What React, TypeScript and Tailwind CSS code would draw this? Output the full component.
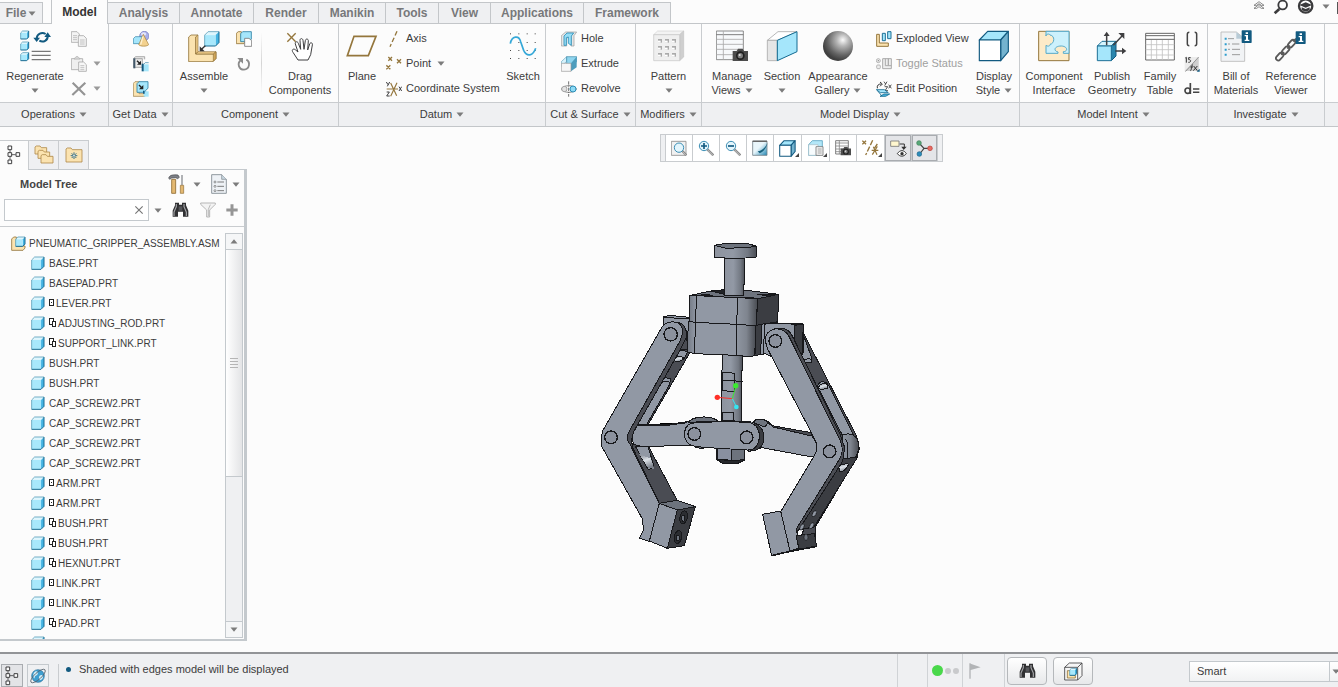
import React from "react";
import type { ReactNode } from "react";

/* ---------- drawing helpers ---------- */

// Icons are drawn on a grid of three units to the pixel.
function Icon({ n = 16, h, children }: { n?: number; h?: number; children: ReactNode }) {
  const hh = h ?? n;
  return (
    <svg width={n} height={hh} viewBox={`0 0 ${n * 3} ${hh * 3}`} className="shrink-0" aria-hidden="true">
      {children}
    </svg>
  );
}

function Caret({ light = false }: { light?: boolean }) {
  return (
    <svg width="8" height="5" viewBox="0 0 8 5" className="shrink-0" aria-hidden="true">
      <path d="M0.5 0.5h7L4 4.8z" fill={light ? "#9a9a9a" : "#7c7c7c"} />
    </svg>
  );
}

function Cube({ x, y, s }: { x: number; y: number; s: number }) {
  const d = s * 0.24;
  return (
    <g strokeLinejoin="round">
      <path d={`M${x} ${y + d}L${x + d} ${y}H${x + s}L${x + s - d} ${y + d}Z`} fill="#dff6fd" />
      <path d={`M${x + s} ${y}V${y + s - d}L${x + s - d} ${y + s}V${y + d}Z`} fill="#45b4e2" />
      <path d={`M${x} ${y + d}H${x + s - d}V${y + s}H${x}Z`} fill="#a8e8fc" />
      <path d={`M${x} ${y + s}V${y + d}L${x + d} ${y}H${x + s}`} fill="none" stroke="#5d9fba" strokeWidth="2.5" />
      <path d={`M${x} ${y + s}H${x + s - d}L${x + s} ${y + s - d}V${y}`} fill="none" stroke="#1b6b91" strokeWidth="3" />
    </g>
  );
}

const gold = "#94763c";
const cream = "#fbe3b0";
const ink = "#3f3f41";

/* ---------- ribbon icons ---------- */

const RegenerateIcon = () => (
  <Icon n={32}>
    <Cube x={5} y={3} s={24} />
    <Cube x={5} y={36} s={24} />
    <Cube x={5} y={68} s={24} />
    <g fill="none" stroke="#125a80" strokeWidth="6">
      <path d="M53 25C54 12 68 5 80 12" />
      <path d="M86 18C87 31 73 39 61 32" />
    </g>
    <path d="M43 23h20l-10 13zM76 21h20L86 7z" fill="#125a80" />
    <path d="M38 64h57M38 76h57M38 89h57" stroke="#777" strokeWidth="4" />
  </Icon>
);
const CopyIcon = () => (
  <Icon>
    <g fill="#f4f4f4" stroke="#a9a9a9" strokeWidth="2.5">
      <path d="M1 2h17l7 7v25H1z" />
      <path d="M22 14h16l8 8v24H22z" />
    </g>
    <path d="M6 14h12M6 20h12M6 26h12M27 27h14M27 33h14M27 39h14" stroke="#a9a9a9" strokeWidth="2" />
  </Icon>
);
const PasteIcon = () => (
  <Icon>
    <path d="M1 8h34v33H1z" fill="#efefef" stroke="#a9a9a9" strokeWidth="2.5" />
    <path d="M9 9c0-4 5-2 6-7h6c1 5 6 3 6 7z" fill="#ddd" stroke="#a9a9a9" strokeWidth="2" />
    <path d="M23 18h15l8 8v20H23z" fill="#f7f7f7" stroke="#a9a9a9" strokeWidth="2.5" />
    <path d="M28 29h12M28 35h12M28 41h12" stroke="#a9a9a9" strokeWidth="2" />
  </Icon>
);
const DeleteIcon = () => (
  <Icon>
    <path d="M5 5l37 37M43 5L4 42" stroke="#949494" strokeWidth="6.5" />
  </Icon>
);
const ShapesIcon = () => (
  <Icon>
    <circle cx="34" cy="15" r="14" fill="#a9afe9" stroke="#6f76bd" strokeWidth="2" />
    <ellipse cx="32" cy="9" rx="8" ry="5" fill="#e3e5fb" />
    <path d="M1 23l6-6h21v21H1z" fill="#a5e6fb" stroke="#2b7fa5" strokeWidth="2" />
    <path d="M31 10l16 31c-5 6-25 6-30 0z" fill="#f3d18e" stroke="#a5803c" strokeWidth="2" />
    <path d="M30 16l-7 25" stroke="#fdf0d0" strokeWidth="4" />
  </Icon>
);
const MergeIcon = () => (
  <Icon>
    <path d="M2 7l6-5h27v8M2 8h26v26H2z" fill="#e9e9e9" stroke="#888" strokeWidth="2" />
    <path d="M1 7h6v30H1z" fill="#42586a" />
    <path d="M31 25h16v21H31z" fill="#a5e6fb" />
    <path d="M26 23h6v23h-6z" fill="#125a80" />
    <path d="M32 25l5-5h10" fill="none" stroke="#2b7fa5" strokeWidth="2" />
    <path d="M12 14l8 8" stroke="#222" strokeWidth="4" />
    <path d="M24 14v12H12z" fill="#222" />
  </Icon>
);
const ImportIcon = () => (
  <Icon>
    <path d="M1 7l5-5h12v36h18v8H1z" fill={cream} stroke={gold} strokeWidth="2" />
    <path d="M12 8l6-6h27v20l-7 6v6H12z" fill="#a5e6fb" stroke="#2b7fa5" strokeWidth="2.5" />
    <path d="M32 31h15v16H32z" fill="#a5e6fb" />
    <path d="M30 29h5v9h-5z" fill="#125a80" />
    <path d="M18 12l8 8" stroke="#222" strokeWidth="4" />
    <path d="M31 12v13H18z" fill="#222" />
  </Icon>
);
const AssembleIcon = () => (
  <Icon n={32}>
    <path d="M2 21l7-6h21l-7 6v51h54l7-6v20l-9 9H2z" fill={cream} stroke={gold} strokeWidth="2.5" />
    <path d="M23 21l7-6v50l-7 7zM23 72l7-7h54l-8 7z" fill="#ecc987" stroke={gold} strokeWidth="2" />
    <path d="M76 72l8-7v20l-8 9z" fill="#d0a557" stroke={gold} strokeWidth="2" />
    <Cube x={50} y={5} s={43} />
    <path d="M52 47L38 60" fill="none" stroke="#333" strokeWidth="4" />
    <path d="M35 49v15h15z" fill="#333" />
  </Icon>
);
const CreateIcon = () => (
  <Icon>
    <path d="M1 7l6-5h9v29h13l-5 7H1z" fill={cream} stroke={gold} strokeWidth="2.5" />
    <path d="M14 8l6-6h26v22l-6 8H14z" fill="#a5e6fb" stroke="#2b7fa5" strokeWidth="2.5" />
    <path d="M26 22h13l8 7v17H26z" fill="#fff" stroke="#777" strokeWidth="2.5" />
  </Icon>
);
const RepeatIcon = () => (
  <Icon>
    <path d="M31 11C44 18 41 40 24 41 8 41 3 22 14 13" fill="none" stroke="#8b8b8b" strokeWidth="5.5" />
    <path d="M4 6h17v17z" fill="#8b8b8b" />
  </Icon>
);
const DragIcon = () => (
  <Icon n={32}>
    <path d="M10 10l25 25M35 10L10 35" stroke={gold} strokeWidth="4" />
    <path
      d="M42 90L27 67c-6-8 2-13 8-7l7 6-8-24c-2-8 7-9 9-2l7 18-2-27c0-7 8-7 9 0l3 27 4-26c1-7 9-6 9 0l-2 28 6-18c2-6 10-4 8 3L80 74l-8 16z"
      fill="#fff" stroke={ink} strokeWidth="3" strokeLinejoin="round"
    />
  </Icon>
);
const PlaneIcon = () => (
  <Icon n={32}>
    <path d="M24 19h66L67 77H4z" fill="none" stroke={gold} strokeWidth="5" />
  </Icon>
);
const AxisIcon = () => (
  <Icon>
    <path d="M33 1L12 47" stroke={gold} strokeWidth="4" strokeDasharray="14 7" />
  </Icon>
);
const PointIcon = () => (
  <Icon>
    <path d="M7 3l11 11M18 3L7 14M33 10l12 12M45 10L33 22M1 28l12 12M13 28L1 40" stroke={gold} strokeWidth="4" />
  </Icon>
);
const CsysIcon = () => (
  <Icon>
    <path d="M2 24h34M14 6l18 38M33 5L14 46" stroke={gold} strokeWidth="3.5" />
    <path d="M1 3l5 8M11 3L4 16M39 17l8 13M47 17l-8 13M2 33h8L2 45h9" fill="none" stroke={ink} strokeWidth="3" />
  </Icon>
);
const SketchIcon = () => (
  <Icon n={32}>
    {[9, 34, 59, 83].map((x) => [10, 36, 60, 84].map((y) => <rect key={`${x}-${y}`} x={x} y={y} width="3" height="3" fill="#444" />))}
    <path d="M10 41c4-24 26-26 31-6l9 26c9 20 28 18 36-6" fill="none" stroke="#35a8d8" strokeWidth="5" />
  </Icon>
);
const HoleIcon = () => (
  <Icon>
    <path d="M1 14L14 3h33l-8 11v31h-9V20H17v25H1z" fill="#e6e6e6" stroke="#999" strokeWidth="2" />
    <path d="M9 15L18 6h20l-7 9v28l-9-6V18l-6 2v23H9z" fill="#98def6" stroke="#2b8fb9" strokeWidth="2.5" />
  </Icon>
);
const ExtrudeIcon = () => (
  <Icon>
    <path d="M1 17L17 2v14L1 31z" fill="#d7f3fc" stroke="#3b86a8" strokeWidth="1.5" />
    <path d="M17 2h30v15L33 27H17z" fill="#8fd5ef" stroke="#3b86a8" strokeWidth="2" />
    <path d="M47 2v32L30 46V22z" fill="#4d9dbd" />
    <path d="M1 22h29v24H1z" fill="#f6f6f6" stroke="#999" strokeWidth="2" />
  </Icon>
);
const RevolveIcon = () => (
  <Icon>
    <ellipse cx="24" cy="24" rx="22" ry="10" fill="none" stroke="#777" strokeWidth="2.5" />
    <circle cx="36" cy="24" r="9" fill="#8edaf5" stroke="#2b8fb9" strokeWidth="3" />
    <ellipse cx="10" cy="24" rx="8" ry="8" fill="#e3e3e3" stroke="#888" strokeWidth="2" />
    <path d="M23 1v46" stroke="#555" strokeWidth="2.5" strokeDasharray="10 3 3 3" />
  </Icon>
);
const PatternIcon = () => (
  <Icon n={32}>
    <path d="M2 14L14 3h78L80 14z" fill="#f3f3f3" stroke="#d0d0d0" strokeWidth="2" />
    <path d="M92 3v78L80 92V14z" fill="#cfcfcf" stroke="#c4c4c4" strokeWidth="2" />
    <path d="M2 14h78v78H2z" fill="#efefef" stroke="#c4c4c4" strokeWidth="2" />
    {[15, 36, 57].map((x) => [27, 48, 69].map((y) => (
      <g key={`${x}-${y}`}>
        <rect x={x} y={y} width="12" height="11" fill="#aaa" />
        <rect x={x} y={y + 5} width="8" height="6" fill="#fff" />
      </g>
    )))}
  </Icon>
);
const Camera = ({ x, y, s = 1 }: { x: number; y: number; s?: number }) => (
  <g transform={`translate(${x} ${y}) scale(${s})`}>
    <path d="M0 8h12l4-7h14l4 7h12v30H0z" fill="#4c4c4c" />
    <circle cx="23" cy="22" r="13" fill="#1f1f1f" />
    <circle cx="23" cy="22" r="8" fill="#808080" />
    <circle cx="21" cy="20" r="3" fill="#ddd" />
  </g>
);
const ManageViewsIcon = () => (
  <Icon n={32}>
    <path d="M1 3h81v86H1z" fill="#f7f9fb" stroke="#777" strokeWidth="2.5" />
    <path d="M1 14h81" stroke="#666" strokeWidth="2.5" />
    <path d="M22 3v86M1 28h81M1 43h81M1 58h81M1 74h81" stroke="#a9a9a9" strokeWidth="2.5" />
    <Camera x={50} y={55} />
  </Icon>
);
const SectionIcon = () => (
  <Icon n={32}>
    <path d="M4 31L36 5h57L34 31z" fill="#fff" stroke="#aaa" strokeWidth="2.5" />
    <path d="M4 31h30v61H4z" fill="#e6e6e6" stroke="#aaa" strokeWidth="2.5" />
    <path d="M34 31L93 5v60L34 92z" fill="#a5e6fb" stroke="#126a91" strokeWidth="3" />
  </Icon>
);
const SphereIcon = () => (
  <Icon n={32}>
    <defs>
      <radialGradient id="sphere" cx="0.66" cy="0.3" r="0.68">
        <stop offset="0" stopColor="#fafafa" />
        <stop offset="0.3" stopColor="#b5b5b5" />
        <stop offset="0.75" stopColor="#636363" />
        <stop offset="1" stopColor="#404040" />
      </radialGradient>
    </defs>
    <circle cx="48" cy="48" r="45" fill="url(#sphere)" />
  </Icon>
);
const ExplodedIcon = () => (
  <Icon>
    <path d="M2 10h8v26h27v10H2z" fill={cream} stroke={gold} strokeWidth="3" />
    <path d="M19 7h9v22h-9z" fill="#a5e6fb" stroke="#1d7096" strokeWidth="3" />
    <path d="M35 2h10v21H35z" fill="#a5e6fb" stroke="#1d7096" strokeWidth="3" />
  </Icon>
);
const ToggleIcon = () => (
  <Icon>
    <circle cx="7" cy="14" r="6" fill="#eee" stroke="#aaa" strokeWidth="2.5" />
    <circle cx="7" cy="14" r="2" fill="#888" />
    <rect x="2" y="27" width="11" height="11" rx="3" fill="#eee" stroke="#aaa" strokeWidth="2.5" />
    <path d="M20 8h26v30H20z" fill="#eee" stroke="#aaa" strokeWidth="3" />
    <path d="M28 8v21h9V8M37 8v21h9" fill="none" stroke="#aaa" strokeWidth="3" />
  </Icon>
);
const EditPositionIcon = () => (
  <Icon>
    <path d="M4 22c-2-10 5-13 11-13M12 3l7 6-7 7" fill="none" stroke="#333" strokeWidth="3" />
    <path d="M24 2l5 7M33 2l-7 12M38 11l8 11M46 11l-8 11M26 17h9L27 29h9" fill="none" stroke="#333" strokeWidth="2.5" />
    <path d="M1 26h24l12 9H13z" fill="#a5e6fb" stroke="#126a91" strokeWidth="2.5" />
    <path d="M12 46l12-7h17l-12 7zM5 30l12 14" fill="#49b4dc" stroke="#126a91" strokeWidth="2.5" />
  </Icon>
);
const DisplayStyleIcon = ({ n = 32 }: { n?: number }) => (
  <svg width={n} height={n} viewBox="0 0 96 96" className="shrink-0" aria-hidden="true">
    <g stroke="#125a80" strokeWidth={n > 20 ? 3.5 : 6} strokeLinejoin="round">
      <path d="M4 30L29 4h62L68 30z" fill="#a5e6fb" />
      <path d="M91 4v61L68 92V30z" fill="#74b3cf" />
      <path d="M4 30h64v62H4z" fill="#fff" />
    </g>
  </svg>
);
const PuzzleIcon = () => (
  <Icon n={32}>
    <path d="M2 4h91v88H2z" fill="#fdebc8" stroke={gold} strokeWidth="3" />
    <path
      d="M24 4h69v66H76v-5c14 0 14-16-6-17-22 0-24 15-10 18v4H24V46c8 6 14-1 12-3 14-2 16-26 0-28-2-5-12-3-12 3z"
      fill="#ccf1fc" stroke="#55a9c9" strokeWidth="3" strokeLinejoin="round"
    />
  </Icon>
);
const PublishIcon = () => (
  <Icon n={32}>
    <path d="M4 48l14-14h42L46 48z" fill="#d7f5fd" stroke="#1d7096" strokeWidth="3" />
    <path d="M46 48l14-14v44L46 92z" fill="#2b86ad" stroke="#125a80" strokeWidth="3" />
    <path d="M4 48h42v44H4z" fill="#a5e6fb" stroke="#1d7096" strokeWidth="3" />
    <path d="M32 46V14M52 46l26-28M58 63h24" stroke={ink} strokeWidth="4.5" />
    <path d="M23 18h18L32 5zM67 9h18v18zM78 53v20l13-10z" fill={ink} />
  </Icon>
);
const FamilyTableIcon = () => (
  <Icon n={32}>
    <path d="M5 10h86v80H5z" fill="#fff" stroke="#666" strokeWidth="3" />
    <path d="M22 30v60M38 30v60M55 30v60M73 30v60M5 44h86M5 59h86M5 75h86" stroke="#c3c3c3" strokeWidth="2.5" />
    <path d="M5 17h86M5 28h86" stroke="#666" strokeWidth="3" />
  </Icon>
);
const ParensIcon = () => (
  <Icon>
    <path d="M16 4c-4 0-6 2-6 6v28c0 4 2 6 6 6M32 4c4 0 6 2 6 6v28c0 4-2 6-6 6" fill="none" stroke="#444" strokeWidth="4.5" />
  </Icon>
);
const SwitchDimIcon = () => (
  <Icon>
    <path d="M2 3h42v42H2z" fill="#ececec" />
    <path d="M2 45L44 3v42z" fill="#cfcfcf" />
    <path d="M4 47L44 3" stroke="#777" strokeWidth="2" />
    <path d="M4 6l3-2v16M20 5h-6v6c8-1 8 9-1 8M19 44c4 1 3-19 8-18M19 33h8M29 30l11 14M40 30L28 44" fill="none" stroke="#333" strokeWidth="3" />
    <path d="M38 47l9-9v9z" fill="#125a80" />
  </Icon>
);
const EqualsIcon = () => (
  <Icon>
    <path d="M19 6v33" stroke="#444" strokeWidth="5" />
    <circle cx="11" cy="29" r="8" fill="none" stroke="#444" strokeWidth="5" />
    <path d="M27 24h19M27 34h19" stroke="#444" strokeWidth="4.5" />
  </Icon>
);
const InfoBadge = ({ x, y }: { x: number; y: number }) => (
  <g transform={`translate(${x} ${y})`}>
    <rect width="30" height="38" rx="2" fill="#125a80" />
    <path d="M12 6h7v5h-7zM9 14h10v14h4v4H9v-4h4V18H9z" fill="#fff" />
  </g>
);
const BomIcon = () => (
  <Icon n={32}>
    <path d="M3 6h46l25 20v68H3z" fill="#f1f3f5" stroke="#b7b7b7" strokeWidth="2.5" />
    <path d="M49 6v20h25z" fill="#b8cbd6" />
    <path d="M24 26h18M36 42h22M24 42h6M36 58h24M24 58h6M36 74h24" stroke="#888" strokeWidth="2.5" />
    <path d="M14 23h6v6h-6zM14 40h6v6h-6zM14 56h6v6h-6zM14 71h6v6h-6z" fill="#2e9dcd" />
    <InfoBadge x={65} y={1} />
  </Icon>
);
const ChainIcon = () => (
  <Icon n={32}>
    <g fill="none" stroke="#5a5a5a" strokeWidth="5.5">
      <rect x="-13" y="-7" width="26" height="14" rx="7" transform="translate(14 80) rotate(-48)" />
      <rect x="-13" y="-7" width="26" height="14" rx="7" transform="translate(32 61) rotate(-48)" />
      <rect x="-13" y="-7" width="26" height="14" rx="7" transform="translate(50 41) rotate(-48)" />
      <path d="M19 75l8-9M37 56l8-9M55 35l8-9" />
    </g>
    <InfoBadge x={62} y={4} />
  </Icon>
);

/* ---------- panel and toolbar icons ---------- */

const TreeIcon = () => (
  <Icon n={14} h={20}>
    <path d="M9 14v30M9 29h17" stroke={ink} strokeWidth="2.5" />
    <g fill="#fcfcfc" stroke={ink} strokeWidth="3">
      <path d="M3 3h11v11H3zM3 23h11v11H3zM3 45h11v11H3zM27 23h11v11H27z" />
    </g>
  </Icon>
);
const FolderShape = ({ x, y, w, h }: { x: number; y: number; w: number; h: number }) => (
  <path d={`M${x} ${y + 7}v-4l4-3h11l4 5h${w - 19}v${h - 5}h-${w}z`} fill={cream} stroke="#b08a4a" strokeWidth="2.5" />
);
const FoldersIcon = () => (
  <Icon n={20}>
    <FolderShape x={3} y={3} w={35} h={24} />
    <FolderShape x={12} y={16} w={35} h={24} />
    <FolderShape x={21} y={29} w={36} h={25} />
  </Icon>
);
const FavFolderIcon = () => (
  <Icon n={18}>
    <FolderShape x={3} y={6} w={48} h={42} />
    <path d="M27 19v20M17 29h20M20 22l14 14M34 22L20 36" stroke="#125a80" strokeWidth="2.5" />
    <circle cx="27" cy="29" r="2.500" fill="#fff" />
  </Icon>
);
const ToolsIcon = () => (
  <Icon n={17} h={20}>
    <path d="M2 12C6 2 16 2 30 3l4 7-5 4-6-3-12 1-6 4z" fill="#7d8087" stroke="#44464a" strokeWidth="2" />
    <path d="M11 16h12v42H11z" fill="#e3b871" stroke="#8f6c32" strokeWidth="2.5" />
    <path d="M42 3v30" stroke="#8a8d92" strokeWidth="4" />
    <path d="M37 34h10v24H37z" fill="#e3b871" stroke="#8f6c32" strokeWidth="2" />
  </Icon>
);
const ListDocIcon = () => (
  <Icon n={16} h={20}>
    <path d="M2 2h30l14 14v42H2z" fill="#eef2f6" stroke="#7c858d" strokeWidth="2.5" />
    <path d="M32 2v14h14" fill="#c8d6e0" stroke="#7c858d" strokeWidth="2" />
    <path d="M19 24h20M19 37h20M19 50h20" stroke="#666" strokeWidth="2.5" />
    <g fill="none" stroke="#666" strokeWidth="2"><circle cx="12" cy="24" r="3" /><circle cx="12" cy="37" r="3" /><circle cx="12" cy="50" r="3" /></g>
  </Icon>
);
const BinocularsIcon = () => (
  <Icon n={17} h={16}>
    <path d="M9 2h12v6h9V2h12v8l7 16v18H33V29H18v15H2V26l7-16z" fill="#303032" />
    <path d="M20 13h11v13H20z" fill="#55565a" />
    <path d="M13 6v8L6 30v12M36 6v8l7 16v12" fill="none" stroke="#a4a5a8" strokeWidth="3.5" />
  </Icon>
);
const FilterIcon = () => (
  <Icon>
    <path d="M2 3h44v4L29 24v21h-9V24L2 7z" fill="#f3f3f3" stroke="#aaa" strokeWidth="2.5" />
    <path d="M31 8L25 22v21" fill="none" stroke="#bbb" strokeWidth="3" />
  </Icon>
);
const PlusIcon = () => (
  <Icon n={12}>
    <path d="M18 1v34M1 18h34" stroke="#959595" strokeWidth="9" />
  </Icon>
);
const AsmIcon = () => (
  <Icon n={15}>
    <path d="M2 9l6-6h8v27h26v6l-6 7H2z" fill={cream} stroke={gold} strokeWidth="2.5" />
    <Cube x={14} y={3} s={28} />
  </Icon>
);
const PartIcon = () => (
  <Icon n={14}>
    <Cube x={2} y={3} s={37} />
  </Icon>
);
const GlobeIcon = () => (
  <Icon n={18}>
    <circle cx="27" cy="27" r="19" fill="#3f9fd0" stroke="#2a6f9a" strokeWidth="2" />
    <path d="M15 17c8-9 14-2 11 4s-9 4-9 11-8-6-2-15zM31 27c8-7 15 0 9 8s-13 3-9-8z" fill="#d4effa" />
    <ellipse cx="27" cy="27" rx="28" ry="10" transform="rotate(-42 27 27)" fill="none" stroke="#55606a" strokeWidth="2.500" />
  </Icon>
);

function Lens({ kind }: { kind: "fit" | "plus" | "minus" }) {
  const cx = kind === "fit" ? 24 : 18;
  const cy = kind === "fit" ? 23 : 18;
  return (
    <Icon>
      {kind === "fit" && <path d="M1 4h44v42H1z" fill="#f1f1f1" stroke="#8b8b8b" strokeWidth="2.5" />}
      <path d={`M${cx + 10} ${cy + 10}L46 46`} stroke="#8a8a8a" strokeWidth="7" />
      <path d={`M${cx + 11} ${cy + 12}L45 46`} stroke="#e3e3e3" strokeWidth="2" />
      <circle cx={cx} cy={cy} r="14" fill="#e3f5fc" stroke="#3d8fb5" strokeWidth="3" />
      {kind !== "fit" && <path d={kind === "plus" ? "M18 9v18M9 18h18" : "M9 18h18"} stroke="#125a80" strokeWidth="5" />}
    </Icon>
  );
}
const RepaintIcon = () => (
  <Icon>
    <defs>
      <linearGradient id="repaint" x1="0" y1="0" x2="1" y2="1"><stop offset="0.45" stopColor="#e9f6fb" /><stop offset="1" stopColor="#1d86b4" /></linearGradient>
    </defs>
    <path d="M2 3h43v43H2z" fill="url(#repaint)" stroke="#77848c" strokeWidth="2.5" />
    <path d="M46 10C40 24 30 32 17 34l6 6c12-5 19-15 23-28z" fill="#17627f" />
    <path d="M2 4h43" stroke="#666" strokeWidth="4" />
  </Icon>
);
const SavedIcon = () => (
  <Icon>
    <path d="M2 14L13 2h30v18l-8 26H2z" fill="#b3e7f8" stroke="#58a4c0" strokeWidth="2.5" />
    <path d="M2 14h28v32H2z" fill="#f7fcfe" stroke="#a5bcc6" strokeWidth="2" />
    <path d="M24 20h21v26H24z" fill="#f6f6f6" stroke="#777" strokeWidth="2.5" />
    <path d="M29 27h12M29 33h12M29 39h12" stroke="#777" strokeWidth="2" />
  </Icon>
);
const ViewMgrIcon = () => (
  <Icon>
    <path d="M2 2h38v40H2z" fill="#fff" stroke="#666" strokeWidth="2.5" />
    <path d="M13 2v40M2 9h38M2 18h38M2 27h38M2 35h38" stroke="#888" strokeWidth="2.5" />
    <Camera x={17} y={20} s={0.68} />
  </Icon>
);
const DatumIcon = () => (
  <Icon n={17} h={16}>
    <path d="M1 2l11 11M12 2L1 13M32 1L11 45M46 12l-9 13" stroke={gold} strokeWidth="4" strokeDasharray="16 5" />
    <path d="M29 31h20M34 20l11 24M46 19L31 44" stroke={gold} strokeWidth="3.500" />
  </Icon>
);
const AnnotIcon = () => (
  <Icon n={17} h={17}>
    <path d="M2 3h25v16H2z" fill="#fff7cf" stroke="#777" strokeWidth="2.500" />
    <path d="M29 12h14v12" fill="none" stroke="#333" strokeWidth="3" />
    <path d="M34 20h16l-9 10z" fill="#333" />
    <path d="M22 41c8-12 20-12 27 0-8 10-19 10-27 0z" fill="#fff" stroke="#333" strokeWidth="3" />
    <circle cx="36" cy="41" r="5" fill="#333" />
  </Icon>
);
const SpinIcon = () => (
  <Icon n={17} h={17}>
    <path d="M9 9l15 16h18M24 25L11 42" fill="none" stroke="#444" strokeWidth="3.500" />
    <circle cx="9" cy="9" r="7" fill="#58a978" stroke="#3c7d57" strokeWidth="2" />
    <circle cx="42" cy="25" r="7" fill="#e86a62" stroke="#b8433c" strokeWidth="2" />
    <circle cx="10" cy="42" r="7" fill="#2d8dbb" stroke="#1a6589" strokeWidth="2" />
  </Icon>
);
const BoxSelectIcon = () => (
  <Icon n={19}>
    <path d="M2 16L16 3h38v38L41 54H2z" fill="#f6f6f6" stroke={ink} strokeWidth="2.500" />
    <path d="M2 16h39v38M41 16L54 3" fill="none" stroke={ink} strokeWidth="2.500" />
    <path d="M10 26h10v12h14v10H10z" fill={cream} stroke={gold} strokeWidth="2.500" />
    <Cube x={17} y={19} s={21} />
  </Icon>
);

/* ---------- ribbon building blocks ---------- */

function Group({ label, width, children }: { label: string; width: string; children: ReactNode }) {
  return (
    <section className={`flex shrink-0 flex-col border-r border-[#c9cccf] ${width}`} aria-label={label}>
      <div className="flex h-[78px]">{children}</div>
      <button className="flex h-6 items-center justify-center gap-1 border-t border-[#c9cccf] bg-[#eff0f2] whitespace-nowrap">
        {label}
        <Caret />
      </button>
    </section>
  );
}

function Big({ icon, lines, width, caret = false }: { icon: ReactNode; lines: string[]; width: string; caret?: boolean }) {
  return (
    <button className={`flex shrink-0 flex-col items-center pt-1.5 leading-[14px] whitespace-nowrap ${width}`}>
      {icon}
      <span className="mt-[7px] block">{lines[0]}</span>
      <span className="flex h-3.5 items-center gap-1">
        {lines[1]}
        {caret && <Caret />}
      </span>
    </button>
  );
}

function Small({ icon, label, caret = false, muted = false }: { icon: ReactNode; label?: string; caret?: boolean; muted?: boolean }) {
  return (
    <button className={`flex h-[25px] items-center gap-1 whitespace-nowrap ${muted ? "text-[#a0a0a0]" : ""}`} aria-label={label ?? "Command"}>
      {icon}
      {label}
      {caret && <span className="ml-0.5 flex"><Caret light={!label} /></span>}
    </button>
  );
}

function Ribbon() {
  return (
    <div className="flex h-[103px] shrink-0 overflow-hidden border-b border-[#c3c6c9]">
      <Group label="Operations" width="w-[109px]">
        <Big icon={<RegenerateIcon />} lines={["Regenerate"]} width="w-[70px]" caret />
        <div className="flex flex-col pt-0.5 pl-px">
          <Small icon={<CopyIcon />} />
          <Small icon={<PasteIcon />} caret />
          <Small icon={<DeleteIcon />} caret />
        </div>
      </Group>
      <Group label="Get Data" width="w-16">
        <div className="flex w-full flex-col items-center pt-0.5">
          <Small icon={<ShapesIcon />} />
          <Small icon={<MergeIcon />} />
          <Small icon={<ImportIcon />} />
        </div>
      </Group>
      <Group label="Component" width="w-[166px]">
        <Big icon={<AssembleIcon />} lines={["Assemble"]} width="w-[62px]" caret />
        <div className="flex w-[26px] flex-col pt-0.5 pl-px">
          <Small icon={<CreateIcon />} />
          <Small icon={<RepeatIcon />} />
        </div>
        <div className="my-2 w-px bg-linear-to-b from-transparent via-[#d5d5d5] to-transparent" />
        <Big icon={<DragIcon />} lines={["Drag", "Components"]} width="w-[76px]" />
      </Group>
      <Group label="Datum" width="w-[207px]">
        <Big icon={<PlaneIcon />} lines={["Plane"]} width="w-[46px]" />
        <div className="flex flex-1 flex-col items-start pt-0.5 pl-px">
          <Small icon={<AxisIcon />} label="Axis" />
          <Small icon={<PointIcon />} label="Point" caret />
          <Small icon={<CsysIcon />} label="Coordinate System" />
        </div>
        <Big icon={<SketchIcon />} lines={["Sketch"]} width="w-[47px]" />
      </Group>
      <Group label="Cut & Surface" width="w-[90px]">
        <div className="flex flex-col items-start pt-0.5 pl-[15px]">
          <Small icon={<HoleIcon />} label="Hole" />
          <Small icon={<ExtrudeIcon />} label="Extrude" />
          <Small icon={<RevolveIcon />} label="Revolve" />
        </div>
      </Group>
      <Group label="Modifiers" width="w-[66px]">
        <Big icon={<PatternIcon />} lines={["Pattern"]} width="w-full" caret />
      </Group>
      <Group label="Model Display" width="w-[318px]">
        <Big icon={<ManageViewsIcon />} lines={["Manage", "Views"]} width="w-[60px]" caret />
        <Big icon={<SectionIcon />} lines={["Section"]} width="w-10" caret />
        <Big icon={<SphereIcon />} lines={["Appearance", "Gallery"]} width="w-[72px]" caret />
        <div className="flex flex-1 flex-col items-start pt-0.5 pl-0.5">
          <Small icon={<ExplodedIcon />} label="Exploded View" />
          <Small icon={<ToggleIcon />} label="Toggle Status" muted />
          <Small icon={<EditPositionIcon />} label="Edit Position" />
        </div>
        <Big icon={<DisplayStyleIcon />} lines={["Display", "Style"]} width="w-[50px]" caret />
      </Group>
      <Group label="Model Intent" width="w-[188px]">
        <Big icon={<PuzzleIcon />} lines={["Component", "Interface"]} width="w-[68px]" />
        <Big icon={<PublishIcon />} lines={["Publish", "Geometry"]} width="w-12" />
        <Big icon={<FamilyTableIcon />} lines={["Family", "Table"]} width="w-12" />
        <div className="flex flex-col pt-0.5">
          <Small icon={<ParensIcon />} />
          <Small icon={<SwitchDimIcon />} />
          <Small icon={<EqualsIcon />} />
        </div>
      </Group>
      <Group label="Investigate" width="w-[117px]">
        <Big icon={<BomIcon />} lines={["Bill of", "Materials"]} width="w-14" />
        <Big icon={<ChainIcon />} lines={["Reference", "Viewer"]} width="w-[54px]" />
      </Group>
      <div className="flex flex-1 flex-col">
        <div className="h-[78px]" />
        <div className="h-6 border-t border-[#c9cccf] bg-[#eff0f2]" />
      </div>
    </div>
  );
}

/* ---------- menu tabs ---------- */

const tabs: [string, string][] = [
  ["Analysis", "w-[72px]"],
  ["Annotate", "w-[74px]"],
  ["Render", "w-[65px]"],
  ["Manikin", "w-[67px]"],
  ["Tools", "w-[53px]"],
  ["View", "w-[52px]"],
  ["Applications", "w-[93px]"],
  ["Framework", "w-[87px]"],
];

function MenuTabs() {
  return (
    <nav className="flex h-6 shrink-0 items-end overflow-hidden text-[12px] font-bold text-[#77787a]">
      <button className="flex h-[22px] w-[43px] shrink-0 items-center justify-center gap-0.5 border border-l-0 border-[#c3c6c9] bg-[#eff0f2]">
        File
        <Caret />
      </button>
      <div className="w-2 self-stretch border-b border-[#c3c6c9]" />
      <button className="h-6 w-[57px] shrink-0 border-x border-[#c3c6c9] bg-[#fcfcfc] text-[#333]" aria-current="page">Model</button>
      {tabs.map(([name, w]) => (
        <button key={name} className={`h-[22px] shrink-0 border-y border-r border-[#c3c6c9] bg-[#eff0f2] ${w}`}>{name}</button>
      ))}
      <div className="flex flex-1 items-start justify-end gap-2 self-stretch overflow-hidden border-b border-[#c3c6c9]">
        <button aria-label="Minimize ribbon">
          <Icon n={12} h={9}>
            <path d="M3 16L18 5l15 11h-8l-7-5-7 5zM3 25l15-11 15 11h-8l-7-5-7 5z" fill="#fff" stroke="#555" strokeWidth="2" />
          </Icon>
        </button>
        <button aria-label="Search">
          <Icon n={16} h={15}>
            <circle cx="29" cy="15" r="13" fill="none" stroke="#3b3b3d" strokeWidth="5.5" />
            <path d="M19 27L5 40" stroke="#3b3b3d" strokeWidth="8" />
          </Icon>
        </button>
        <button aria-label="Learning">
          <Icon n={17} h={15}>
            <circle cx="26" cy="18" r="20" fill="#fff" stroke="#3b3b3d" strokeWidth="7" />
            <path d="M7 15l19-8 19 8-19 8z" fill="#3b3b3d" />
            <path d="M14 22v8c8 5 16 5 24 0v-8l-12 5z" fill="#3b3b3d" />
          </Icon>
        </button>
        <button aria-label="More" className="-mr-px mt-1"><Caret /></button>
        <button aria-label="Help" className="mt-0.5 h-3 w-px bg-[#555]" />
      </div>
    </nav>
  );
}

/* ---------- model tree ---------- */

type Mark = "none" | "box" | "pair";
const parts: [string, Mark][] = [
  ["BASE.PRT", "none"],
  ["BASEPAD.PRT", "none"],
  ["LEVER.PRT", "box"],
  ["ADJUSTING_ROD.PRT", "pair"],
  ["SUPPORT_LINK.PRT", "pair"],
  ["BUSH.PRT", "none"],
  ["BUSH.PRT", "none"],
  ["CAP_SCREW2.PRT", "none"],
  ["CAP_SCREW2.PRT", "none"],
  ["CAP_SCREW2.PRT", "none"],
  ["CAP_SCREW2.PRT", "none"],
  ["ARM.PRT", "box"],
  ["ARM.PRT", "box"],
  ["BUSH.PRT", "pair"],
  ["BUSH.PRT", "pair"],
  ["HEXNUT.PRT", "pair"],
  ["LINK.PRT", "box"],
  ["LINK.PRT", "box"],
  ["PAD.PRT", "pair"],
  ["", "none"],
];

function MarkIcon({ kind }: { kind: Mark }) {
  if (kind === "none") return null;
  if (kind === "box")
    return (
      <svg width="7" height="9" viewBox="0 0 7 9" className="shrink-0 self-center" shapeRendering="crispEdges" aria-hidden="true">
        <path d="M0.500 0.500h4v6h-4z" fill="#fff" stroke="#222" />
        <path d="M2 3h1v1H2z" fill="#222" />
      </svg>
    );
  return (
    <svg width="9" height="10" viewBox="0 0 9 10" className="shrink-0 self-center" shapeRendering="crispEdges" aria-hidden="true">
      <path d="M0.500 0.500h4v6h-4z" fill="#fff" stroke="#222" />
      <path d="M3.500 3.500h3v5h-3z" fill="#fff" stroke="#222" />
    </svg>
  );
}

function ModelTree() {
  return (
    <aside className="flex w-[247px] shrink-0 flex-col pt-[13px] pb-[11px]">
      <div className="flex h-[29px] shrink-0">
        <button className="flex w-[29px] items-center justify-center border-t border-r border-[#c9cccf]" aria-label="Model tree"><TreeIcon /></button>
        <button className="flex w-[30px] items-center justify-center border-t border-r border-[#c9cccf] bg-[#eff0f2]" aria-label="Folder browser"><FoldersIcon /></button>
        <button className="flex w-[30px] items-center justify-center border-t border-r border-[#c9cccf] bg-[#eff0f2]" aria-label="Favorites"><FavFolderIcon /></button>
      </div>
      <div className="flex min-h-0 flex-1 flex-col border-r-[3px] border-b-2 border-[#c4c9cd]">
        <div className="flex h-[30px] shrink-0 items-center pb-px">
          <div className="w-7 shrink-0 self-stretch" />
          <div className="flex flex-1 items-center self-stretch border-t border-[#c4c9cd]">
            <h2 className="-ml-2 flex-1 font-bold text-[#444]">Model Tree</h2>
            <div className="flex items-center gap-2 pr-1">
              <button aria-label="Settings" className="flex items-center gap-2"><ToolsIcon /><Caret /></button>
              <button aria-label="Show" className="ml-0.5 flex items-center gap-[5px]"><ListDocIcon /><Caret /></button>
            </div>
          </div>
        </div>
        <div className="flex h-7 shrink-0 items-start border-b border-[#c9cccf] pl-1">
          <div className="flex h-[22px] w-[145px] items-center border border-[#c4c9cd] bg-white pr-1">
            <input aria-label="Search model tree" className="h-full min-w-0 flex-1 px-1 outline-none" />
            <button aria-label="Clear" className="flex">
              <Icon n={10}><path d="M4 4l22 22M26 4L4 26" stroke="#777" strokeWidth="3.500" /></Icon>
            </button>
          </div>
          <div className="flex h-[22px] flex-1 items-center justify-between pr-1.5 pl-[5px]">
            <button aria-label="Search options"><Caret /></button>
            <button aria-label="Find"><BinocularsIcon /></button>
            <button aria-label="Filter"><FilterIcon /></button>
            <button aria-label="Add"><PlusIcon /></button>
          </div>
        </div>
        <div className="flex min-h-0 flex-1 pt-1.5">
          <ul className="min-w-0 flex-1 overflow-hidden text-[10px] whitespace-nowrap text-[#3c3c3c]">
            <li className="flex h-5 items-center gap-[3px] pl-[11px]"><AsmIcon />PNEUMATIC_GRIPPER_ASSEMBLY.ASM</li>
            {parts.map(([name, mark], i) => (
              <li key={i} className="flex h-5 items-center pl-[31px]">
                <PartIcon />
                <span className="ml-1 flex items-center"><MarkIcon kind={mark} />{name}</span>
              </li>
            ))}
          </ul>
          <div className="mr-px mb-px flex w-[18px] shrink-0 flex-col border border-[#c4c9cd] bg-[#eff0f2]">
            <button aria-label="Scroll up" className="flex h-4 items-center justify-center border-b border-[#c4c9cd] bg-[#f5f6f7]"><span className="rotate-180"><Caret /></span></button>
            <div className="flex h-[227px] flex-col items-center justify-center gap-0.5 border-b border-[#c4c9cd] bg-linear-to-r from-white to-[#e3e4e6]">
              <i className="h-px w-2 bg-[#b5b5b5]" />
              <i className="h-px w-2 bg-[#b5b5b5]" />
              <i className="h-px w-2 bg-[#b5b5b5]" />
              <i className="h-px w-2 bg-[#b5b5b5]" />
            </div>
            <div className="flex-1" />
            <button aria-label="Scroll down" className="flex h-4 items-center justify-center border-t border-[#c4c9cd] bg-[#f5f6f7]"><Caret /></button>
          </div>
        </div>
      </div>
    </aside>
  );
}

/* ---------- graphics area ---------- */

function ViewToolbar() {
  const items: { name: string; icon: ReactNode; menu?: boolean; on?: boolean }[] = [
    { name: "Refit", icon: <Lens kind="fit" /> },
    { name: "Zoom in", icon: <Lens kind="plus" /> },
    { name: "Zoom out", icon: <Lens kind="minus" /> },
    { name: "Repaint", icon: <RepaintIcon /> },
    { name: "Display style", icon: <DisplayStyleIcon n={17} />, menu: true },
    { name: "Saved orientations", icon: <SavedIcon />, menu: true },
    { name: "View manager", icon: <ViewMgrIcon /> },
    { name: "Datum display", icon: <DatumIcon />, menu: true },
    { name: "Annotation display", icon: <AnnotIcon />, on: true },
    { name: "Spin center", icon: <SpinIcon />, on: true },
  ];
  return (
    <div className="flex h-7 border border-[#c9cccf] bg-[#eff0f2] pr-1 pl-1" role="toolbar" aria-label="Graphics toolbar">
      {items.map((it) => (
        <button
          key={it.name}
          aria-label={it.name}
          className={`relative flex items-center justify-center border-l border-[#c9cccf] last:border-r ${it.menu ? "w-7" : "w-[27px]"} ${it.on ? "bg-[#e4e5e8] ring-1 ring-[#a9acb0] ring-inset" : "bg-white"}`}
        >
          {it.icon}
          {it.menu && (
            <svg width="4" height="4" viewBox="0 0 4 4" className="absolute right-0.5 bottom-1" aria-hidden="true"><path d="M4 0v4H0z" fill="#444" /></svg>
          )}
        </button>
      ))}
    </div>
  );
}

const L = "#9198a4";
const M = "#6d737d";
const D = "#4a4c53";
const K = "#3b3d42";

function Gripper() {
  return (
    <svg width="280" height="330" viewBox="0 0 840 990" className="shrink-0" role="img" aria-label="Pneumatic gripper assembly">
      <defs>
        <linearGradient id="rod"><stop offset="0" stopColor="#8d939e" /><stop offset="0.45" stopColor="#9299a5" /><stop offset="0.8" stopColor="#737983" /><stop offset="1" stopColor="#4d5057" /></linearGradient>
        <linearGradient id="corner"><stop offset="0" stopColor="#8f96a1" /><stop offset="0.5" stopColor="#7f858f" /><stop offset="1" stopColor="#474a50" /></linearGradient>
        <linearGradient id="left"><stop offset="0" stopColor="#747a85" /><stop offset="1" stopColor="#9299a5" /></linearGradient>
        <linearGradient id="shine" x1="0" y1="0" x2="0.4" y2="1"><stop offset="0" stopColor="#7c828c" /><stop offset="0.5" stopColor="#dde2e8" /><stop offset="1" stopColor="#7c828c" /></linearGradient>
      </defs>
      <g stroke="#17181b" strokeWidth="3" strokeLinejoin="round" shapeRendering="crispEdges">
        {/* left bracket and rear arm */}
        <path d="M220 246l18-5 59 6v105l-30 20-47-100z" fill={L} />
        <path d="M222 247l75 5" />
        <path d="M272 330l17-20 10 44-124 213-48 36-12-6z" fill={D} />
        <path d="M270 345l21-2M252 372l14-28 28 6-14 24z" fill={L} />
        <path d="M250 374c2-8 22-12 30-6l-4 8-16 5z" fill="url(#shine)" />
        <path d="M198 466c10-22 18-36 28-38l16 4-4 18-68 118-36 0z" fill={L} />
        <path d="M212 448c6-12 20-12 29-4" fill="none" />

        {/* lower rod and nut */}
        <path d="M397 355h61v50h-4v160h-61V405h4z" fill="url(#rod)" />
        <path d="M397 411l37 4v55l-37-3zM393 436l65 3M397 531h34v28h-34z" fill="none" />
        <path d="M380 640h84v36l-22 10h-42l-20-12z" fill={M} />
        <path d="M382 640h42v36l-42-4z" fill="#8990a0" />
        <path d="M382 673l42 4 38-3-20 12h-44z" fill="#26282c" />

        {/* left link */}
        <path d="M125 568h115l50-8 25 3v68l-185 4z" fill={L} />
        <path d="M128 569h112l52-7" strokeWidth="5" />
        <path d="M294 562c12-16 30-14 44-16 25-1 38 4 47 14z" fill={M} />
        <path d="M310 632c8 8 28 10 36 6" fill={M} />

        {/* right rear arm */}
        <path d="M520 263l120 5-2 92-80 10-43-18z" fill={L} />
        <path d="M612 271l28-3-4 95-24-26z" fill={K} />
        <path d="M524 264l116 3" strokeWidth="5" />
        <path d="M640 294l160 310 8 36-8 28-125 210 2 55-55-6 130-285-150-330 36 50z" fill={D} />
        <path d="M640 300l25 68v14l-20 2-24-40 18 15z" fill={L} />
        <path d="M640 378c4-8 20-8 25-4" fill="none" />
        <path d="M684 458c-4-20 22-24 32-6l76 150-24 20z" fill={L} />
        <path d="M686 460c0-16 20-16 28-10l-2 10-18 4z" fill="url(#shine)" />
        <path d="M757 600c22-8 44-2 50 30-2 36-20 54-50 58z" fill="url(#corner)" />
        <path d="M764 610c12 10 14 48 2 72" fill="none" />
        <path d="M755 672l48-6-131 210-54 10z" fill={K} />
        <path d="M746 690c14-2 26-6 30-2-6 14-18 24-28 22z" fill="url(#shine)" />

        {/* right link */}
        <path d="M490 560c8-10 30-10 44 0l16 14 114 24 16 30v36l-14 2-150-28-40 12z" fill={L} />
        <path d="M532 562l18 14 114 27v-10l-112-20z" fill={D} />
        <path d="M490 562c8-12 34-14 44 2l-10 12z" fill={M} />

        {/* centre plate */}
        <path d="M470 560c34 0 52 22 52 46 0 28-16 44-50 42z" fill={K} />
        <path d="M482 562c26 6 30 70-4 84" fill="none" stroke="#888e98" />
        <path d="M318 563l96-4 66 4c22 6 30 26 28 46-4 28-16 38-38 36l-130-8-28-4c-20-4-30-20-29-38 2-20 14-32 35-32z" fill={L} />
        <path d="M318 562l100-4 62 4" strokeWidth="5" fill="none" />

        {/* left front arm */}
        <path d="M120 625l30 8 26 2 86 162-54 8z" fill={D} />
        <path d="M136 634l38 1 16 52-2 14-14 2z" fill={L} />
        <path d="M148 658l34 12 10 32-18-4z" fill="url(#shine)" stroke="none" />
        <path d="M248 262c30-4 44 16 41 44l-19 40-140 246-6 26 4 20 80 167-103-195z" fill={D} />
        <path d="M215 278c12-22 50-24 60-2 5 12 2 28-6 44L118 588c-9 15-8 28 2 40l88 178-30 113-30-9 12-25-2-32L36 636c-5-18-4-32 3-50z" fill={L} />

        {/* left pad */}
        <path d="M208 805l54-9 54 19-54 10z" fill={M} />
        <path d="M208 805l54 20-30 115-54-22z" fill={L} />
        <path d="M262 825l54-10-33 117-51 8z" fill={K} />
        <ellipse cx="281" cy="847" rx="11" ry="20" transform="rotate(12 281 847)" fill="#2b2d31" />
        <ellipse cx="280" cy="850" rx="5" ry="9" fill={M} />
        <ellipse cx="264" cy="906" rx="11" ry="20" transform="rotate(12 264 906)" fill="#2b2d31" />
        <ellipse cx="263" cy="909" rx="5" ry="9" fill={M} />

        {/* body */}
        <path d="M297 182l70-15h110l89 11-62 13-60-3z" fill={M} />
        <path d="M362 168l40-4v14zM312 182l40-4 18 5zM450 190l36-3 17 5zM500 177l60 2-20 6z" fill="#202226" />
        <path d="M503 191l63-13-3 82-64 11z" fill={K} />
        <path d="M443 188l60 3-5 81-58-4z" fill="url(#corner)" />
        <path d="M320 182l123 6-3 80-124-6z" fill={L} />
        <path d="M297 180l23 2-4 80-19-3z" fill="url(#left)" />
        <path d="M497 271l66-11-40 8-8 90-20 4z" fill={K} />
        <path d="M515 268l9-3-4 94h-8z" fill={L} />
        <path d="M440 268l58 4-4 90-16 3-38-4z" fill="url(#corner)" />
        <path d="M316 262l124 6-2 93-124-5z" fill={L} />
        <path d="M295 259l21 3-2 94-22-5z" fill="url(#left)" />
        <path d="M402 68h62v80h-3v34h-59z" fill="url(#rod)" />
        <path d="M373 32h125v34c-30 5-95 5-125 0z" fill="url(#rod)" />
        <path d="M373 31l22-4 78-1 25 7-20 4-68 3z" fill={M} />

        {/* right front arm */}
        <path d="M552 281c36-8 50 8 58 28l140 288 14 40-6 42-136 212-8-40 124-220z" fill={D} />
        <path d="M526 318c-2-44 56-48 72-12l152 310c10 18 8 42-5 62L620 880l5 60-25 8-28-118 102-170c10-18 8-34-2-52L532 340z" fill={L} />

        {/* right pad */}
        <path d="M518 838l54-10 28 120-55 14z" fill={L} />
        <path d="M618 902l55-6 7 38-52 8z" fill={K} />
        <path d="M545 962l55-13 80-15" fill="none" strokeWidth="5" />
        <g fill={L} strokeWidth="2">
          <ellipse cx="673" cy="836" rx="5" ry="10" transform="rotate(30 673 836)" />
          <ellipse cx="636" cy="876" rx="5" ry="10" transform="rotate(30 636 876)" />
          <ellipse cx="665" cy="872" rx="5" ry="10" transform="rotate(30 665 872)" />
          <ellipse cx="648" cy="907" rx="6" ry="9" fill={M} />
        </g>

        {/* pins */}
        <g fill="#8b919d" strokeWidth="4">
          <circle cx="242" cy="298" r="20" />
          <circle cx="63" cy="607" r="19" />
          <circle cx="313" cy="597" r="19" />
          <circle cx="470" cy="607" r="19" />
          <circle cx="556" cy="318" r="19" />
          <circle cx="719" cy="649" r="19" />
        </g>
      </g>
      <g fill="none" strokeWidth="3">
        <path d="M382 487l46 4" stroke="#ff3028" />
        <path d="M427 491l10-36" stroke="#3bea30" />
        <path d="M427 491l12 24" stroke="#35e6f2" />
      </g>
      <circle cx="382" cy="487" r="8" fill="#ff3028" />
      <circle cx="437" cy="452" r="8" fill="#3bea30" />
      <circle cx="439" cy="516" r="7" fill="#35e6f2" />
    </svg>
  );
}

/* ---------- status bar ---------- */

function StatusBar() {
  return (
    <footer className="flex h-[35px] shrink-0 items-stretch border-t-2 border-[#929497] bg-[#eff0f2]">
      <div className="flex items-end gap-1 px-px">
        <button aria-label="Toggle tree" className="flex h-[23px] w-[22px] items-center justify-center border border-[#a9acb0] bg-[#e3e4e7]"><TreeIcon /></button>
        <button aria-label="Toggle browser" className="flex h-[23px] w-[22px] items-center justify-center border border-[#c4c9cd]"><GlobeIcon /></button>
      </div>
      <div className="mt-2.5 ml-2 w-px bg-[#c9cccf]" />
      <p className="flex flex-1 items-center gap-2 pb-0.5 pl-[7px]"><span className="size-[5px] rounded-full bg-[#125a80]" />Shaded with edges model will be displayed</p>
      <div className="flex shrink-0">
        <div className="w-[31px] border-x border-[#d0d3d6]" />
        <div className="flex w-[35px] items-center gap-0.5 border-r border-[#d0d3d6] pl-1">
          <i className="size-[11px] rounded-full bg-[#49d84a]" />
          <i className="size-1.5 rounded-full bg-[#c9cacc]" />
          <i className="size-1.5 rounded-full bg-[#c9cacc]" />
        </div>
        <div className="flex w-[42px] items-center border-r border-[#d0d3d6] pl-1.5">
          <Icon n={12} h={16}><path d="M1 1h4v46H1zM5 2l30 11L5 21z" fill="#b2b4b6" /></Icon>
        </div>
        <div className="flex items-center gap-[6px] px-[2px] pt-px">
          <button aria-label="Find" className="flex h-7 w-10 items-center justify-center rounded-sm border border-[#b5b8bb] bg-linear-to-b from-white to-[#e7e8ea]"><BinocularsIcon /></button>
          <button aria-label="Selection" className="flex h-7 w-10 items-center justify-center rounded-sm border border-[#b5b8bb] bg-linear-to-b from-white to-[#e7e8ea]"><BoxSelectIcon /></button>
        </div>
        <div className="mt-px ml-[94px] flex h-[21px] w-[149px] self-center border border-r-0 border-[#c4c9cd] bg-linear-to-b from-white to-[#f1f2f3]">
          <select aria-label="Selection filter" className="min-w-0 flex-1 appearance-none px-[7px] outline-none">
            <option>Smart</option>
          </select>
          <span className="flex w-[9px] items-center overflow-hidden border-l border-[#c4c9cd] pl-0.5"><Caret /></span>
        </div>
      </div>
    </footer>
  );
}

export default function App() {
  return (
    <div className="flex h-screen flex-col overflow-hidden bg-[#fcfcfc] font-['Liberation_Sans',Arial,sans-serif] text-[11px] text-[#3c3c3c]">
      <MenuTabs />
      <Ribbon />
      <div className="flex min-h-0 flex-1">
        <ModelTree />
        <main className="flex min-w-0 flex-1 flex-col items-center overflow-hidden pt-[7px]">
          <div className="pl-[18px]"><ViewToolbar /></div>
          <div className="mt-[73px] pr-[126px]"><Gripper /></div>
        </main>
      </div>
      <StatusBar />
    </div>
  );
}
